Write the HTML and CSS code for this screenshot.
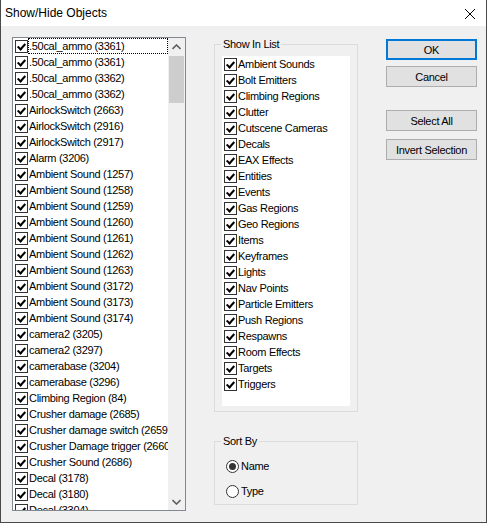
FILE: index.html
```html
<!DOCTYPE html>
<html>
<head>
<meta charset="utf-8">
<link rel="stylesheet" href="styles.css">
</head>
<body>
<div class="window">
  <div class="titlebar">
    <span class="title">Show/Hide Objects</span>
    <svg class="close" width="12" height="12" viewBox="0 0 12 12"><path d="M1 1 L11 11 M11 1 L1 11" stroke="#000" stroke-width="1" fill="none"/></svg>
  </div>
  <div class="content">
    <div class="objlist">
      <div class="items">
        <div class="row"><span class="cb on"></span><span class="lbl focus">.50cal_ammo (3361)</span></div>
        <div class="row"><span class="cb on"></span><span class="lbl">.50cal_ammo (3361)</span></div>
        <div class="row"><span class="cb on"></span><span class="lbl">.50cal_ammo (3362)</span></div>
        <div class="row"><span class="cb on"></span><span class="lbl">.50cal_ammo (3362)</span></div>
        <div class="row"><span class="cb on"></span><span class="lbl">AirlockSwitch (2663)</span></div>
        <div class="row"><span class="cb on"></span><span class="lbl">AirlockSwitch (2916)</span></div>
        <div class="row"><span class="cb on"></span><span class="lbl">AirlockSwitch (2917)</span></div>
        <div class="row"><span class="cb on"></span><span class="lbl">Alarm (3206)</span></div>
        <div class="row"><span class="cb on"></span><span class="lbl">Ambient Sound (1257)</span></div>
        <div class="row"><span class="cb on"></span><span class="lbl">Ambient Sound (1258)</span></div>
        <div class="row"><span class="cb on"></span><span class="lbl">Ambient Sound (1259)</span></div>
        <div class="row"><span class="cb on"></span><span class="lbl">Ambient Sound (1260)</span></div>
        <div class="row"><span class="cb on"></span><span class="lbl">Ambient Sound (1261)</span></div>
        <div class="row"><span class="cb on"></span><span class="lbl">Ambient Sound (1262)</span></div>
        <div class="row"><span class="cb on"></span><span class="lbl">Ambient Sound (1263)</span></div>
        <div class="row"><span class="cb on"></span><span class="lbl">Ambient Sound (3172)</span></div>
        <div class="row"><span class="cb on"></span><span class="lbl">Ambient Sound (3173)</span></div>
        <div class="row"><span class="cb on"></span><span class="lbl">Ambient Sound (3174)</span></div>
        <div class="row"><span class="cb on"></span><span class="lbl">camera2 (3205)</span></div>
        <div class="row"><span class="cb on"></span><span class="lbl">camera2 (3297)</span></div>
        <div class="row"><span class="cb on"></span><span class="lbl">camerabase (3204)</span></div>
        <div class="row"><span class="cb on"></span><span class="lbl">camerabase (3296)</span></div>
        <div class="row"><span class="cb on"></span><span class="lbl">Climbing Region (84)</span></div>
        <div class="row"><span class="cb on"></span><span class="lbl">Crusher damage (2685)</span></div>
        <div class="row"><span class="cb on"></span><span class="lbl">Crusher damage switch (2659)</span></div>
        <div class="row"><span class="cb on"></span><span class="lbl">Crusher Damage trigger (2660)</span></div>
        <div class="row"><span class="cb on"></span><span class="lbl">Crusher Sound (2686)</span></div>
        <div class="row"><span class="cb on"></span><span class="lbl">Decal (3178)</span></div>
        <div class="row"><span class="cb on"></span><span class="lbl">Decal (3180)</span></div>
        <div class="row"><span class="cb on"></span><span class="lbl">Decal (3304)</span></div>
      </div>
      <div class="vscroll">
        <div class="arrow"><svg width="9" height="6" viewBox="0 0 9 6"><path d="M0.5 5 L4.5 1 L8.5 5" stroke="#606060" stroke-width="1.6" fill="none"/></svg></div>
        <div class="thumb"></div>
        <div class="track"></div>
        <div class="arrow"><svg width="9" height="6" viewBox="0 0 9 6"><path d="M0.5 1 L4.5 5 L8.5 1" stroke="#606060" stroke-width="1.6" fill="none"/></svg></div>
      </div>
    </div>

    <div class="middle">
      <fieldset class="group show-group">
        <legend>Show In List</legend>
        <div class="typelist">
          <div class="row"><span class="cb on"></span><span class="lbl">Ambient Sounds</span></div>
          <div class="row"><span class="cb on"></span><span class="lbl">Bolt Emitters</span></div>
          <div class="row"><span class="cb on"></span><span class="lbl">Climbing Regions</span></div>
          <div class="row"><span class="cb on"></span><span class="lbl">Clutter</span></div>
          <div class="row"><span class="cb on"></span><span class="lbl">Cutscene Cameras</span></div>
          <div class="row"><span class="cb on"></span><span class="lbl">Decals</span></div>
          <div class="row"><span class="cb on"></span><span class="lbl">EAX Effects</span></div>
          <div class="row"><span class="cb on"></span><span class="lbl">Entities</span></div>
          <div class="row"><span class="cb on"></span><span class="lbl">Events</span></div>
          <div class="row"><span class="cb on"></span><span class="lbl">Gas Regions</span></div>
          <div class="row"><span class="cb on"></span><span class="lbl">Geo Regions</span></div>
          <div class="row"><span class="cb on"></span><span class="lbl">Items</span></div>
          <div class="row"><span class="cb on"></span><span class="lbl">Keyframes</span></div>
          <div class="row"><span class="cb on"></span><span class="lbl">Lights</span></div>
          <div class="row"><span class="cb on"></span><span class="lbl">Nav Points</span></div>
          <div class="row"><span class="cb on"></span><span class="lbl">Particle Emitters</span></div>
          <div class="row"><span class="cb on"></span><span class="lbl">Push Regions</span></div>
          <div class="row"><span class="cb on"></span><span class="lbl">Respawns</span></div>
          <div class="row"><span class="cb on"></span><span class="lbl">Room Effects</span></div>
          <div class="row"><span class="cb on"></span><span class="lbl">Targets</span></div>
          <div class="row"><span class="cb on"></span><span class="lbl">Triggers</span></div>
        </div>
      </fieldset>
      <fieldset class="group sort-group">
        <legend>Sort By</legend>
        <div class="radio-row first"><span class="radio checked"></span><span class="lbl">Name</span></div>
        <div class="radio-row"><span class="radio"></span><span class="lbl">Type</span></div>
      </fieldset>
    </div>

    <div class="buttons">
      <div class="btn default">OK</div>
      <div class="btn cancel">Cancel</div>
      <div class="btn selall">Select All</div>
      <div class="btn invert">Invert Selection</div>
    </div>
  </div>
</div>
</body>
</html>
```

FILE: styles.css
```css
* { box-sizing: border-box; }
html, body { margin: 0; padding: 0; background: #ffffff; }
body {
  font-family: "Liberation Sans", Arial, sans-serif;
  font-size: 11px;
  color: #000;
}
.window {
  width: 487px;
  height: 523px;
  border: 1px solid #4a4a4a;
  border-top: none;
  background: #f0f0f0;
  display: flex;
  flex-direction: column;
}
.titlebar {
  height: 26px;
  background: #ffffff;
  display: flex;
  align-items: center;
  justify-content: space-between;
  padding: 0 10px 0 4px;
  flex: none;
}
.title {
  font-size: 12px;
  letter-spacing: 0;
}
.close { display: block; margin-top: 2px; }

.content {
  display: flex;
  padding: 11px 0 0 11px;
  flex: 1;
}

/* left object list */
.objlist {
  width: 174px;
  height: 474px;
  border: 1px solid #828790;
  background: #ffffff;
  display: flex;
  overflow: hidden;
  flex: none;
}
.items {
  flex: 1;
  overflow: hidden;
  white-space: nowrap;
}
.row {
  height: 16px;
  display: flex;
  align-items: center;
  letter-spacing: -0.3px;
  white-space: nowrap;
}
.cb {
  width: 13px;
  height: 13px;
  border: 1px solid #333333;
  background: #ffffff;
  flex: none;
  margin-left: 2px;
  position: relative;
}
.cb.on::after {
  content: "";
  position: absolute;
  left: 3px;
  top: 1px;
  width: 3px;
  height: 6px;
  border-right: 2px solid #000;
  border-bottom: 2px solid #000;
  transform: rotate(42deg);
}
.lbl {
  padding: 0;
  line-height: 14px;
  border: 1px solid transparent;
}
.lbl.focus {
  flex: 1;
  border: 1px dotted #000;
}

.vscroll {
  width: 17px;
  flex: none;
  background: #f0f0f0;
  display: flex;
  flex-direction: column;
}
.arrow {
  height: 17px;
  display: flex;
  align-items: center;
  justify-content: center;
  flex: none;
}
.arrow svg { display: block; }
.thumb {
  height: 47px;
  margin: 1px 1px 0 1px;
  background: #cdcdcd;
  flex: none;
}
.track { flex: 1; }

/* middle groups */
.middle {
  width: 144px;
  margin-left: 28px;
  margin-top: 1px;
  display: flex;
  flex-direction: column;
  flex: none;
}
.group {
  margin: 0;
  padding: 0;
  border: 1px solid #dcdcdc;
  min-width: 0;
}
.group legend {
  padding: 0 2px;
  margin-left: 6px;
  line-height: 13px;
  letter-spacing: -0.3px;
}
.typelist {
  margin: 5px 7px 5px 7px;
  height: 350px;
  background: #ffffff;
}
.sort-group {
  margin-top: 23px;
  padding-bottom: 5px;
}
.radio-row {
  height: 16px;
  display: flex;
  align-items: center;
  margin-top: 9px;
  padding-left: 11px;
  letter-spacing: -0.3px;
}
.radio-row.first { margin-top: 10px; }
.radio {
  width: 13px;
  height: 13px;
  border: 1px solid #333333;
  border-radius: 50%;
  background: #ffffff;
  flex: none;
  display: flex;
  align-items: center;
  justify-content: center;
  margin-right: 1px;
}
.radio.checked::after {
  content: "";
  width: 7px;
  height: 7px;
  border-radius: 50%;
  background: #333333;
}

/* buttons */
.buttons {
  margin-left: 28px;
  margin-top: 2px;
  display: flex;
  flex-direction: column;
  width: 91px;
  flex: none;
}
.btn {
  height: 21px;
  border: 1px solid #adadad;
  background: #e1e1e1;
  display: flex;
  align-items: center;
  justify-content: center;
  letter-spacing: -0.3px;
}
.btn.default {
  border: 2px solid #0078d7;
}
.btn.cancel { margin-top: 6px; }
.btn.selall { margin-top: 23px; }
.btn.invert { margin-top: 8px; }
```
